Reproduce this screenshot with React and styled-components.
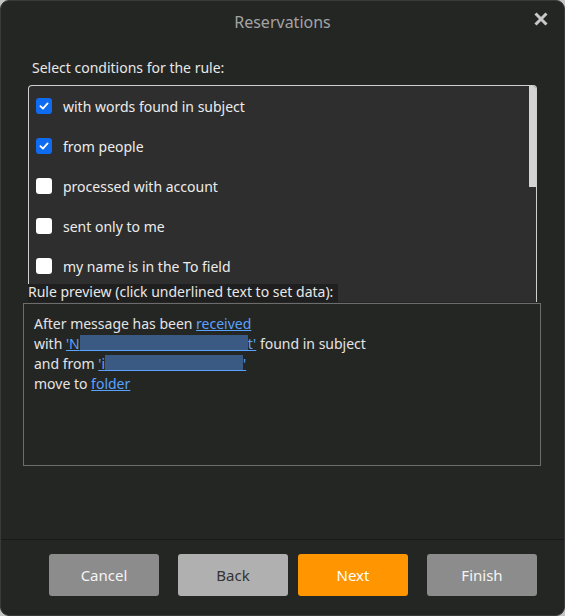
import React from 'react';
import styled, { createGlobalStyle } from 'styled-components';

const Global = createGlobalStyle`
  html, body {
    margin: 0;
    padding: 0;
    background: #c4c4c4;
  }
  body {
    font-family: "Noto Sans", "Open Sans", sans-serif;
  }
`;

const Dialog = styled.div`
  width: 565px;
  height: 616px;
  box-sizing: border-box;
  background: #242624;
  border: 1px solid #3a3a3a;
  border-radius: 9px;
  display: flex;
  flex-direction: column;
  overflow: hidden;
`;

const TitleBar = styled.div`
  position: relative;
  height: 42px;
  display: flex;
  align-items: center;
  justify-content: center;
  color: #a3a3a3;
  font-size: 16px;
`;

const CloseBtn = styled.div`
  position: absolute;
  right: 15px;
  top: 10px;
  width: 16px;
  height: 16px;
  display: flex;
`;

const Body = styled.div`
  flex: 1;
  padding: 0 23px 0 22px;
  display: flex;
  flex-direction: column;
`;

const Heading = styled.div`
  color: #e8e8e8;
  font-size: 14px;
  padding: 15px 0 0 9px;
  height: 27px;
`;

const ListBox = styled.div`
  position: relative;
  margin-left: 5px;
  margin-right: 4px;
  height: 217px;
  box-sizing: border-box;
  background: #2e2e2e;
  border: 1px solid #cfcfcf;
  border-bottom: none;
  border-radius: 4px 4px 0 0;
  overflow: hidden;
`;

const Thumb = styled.div`
  position: absolute;
  top: 0;
  right: 0;
  width: 7px;
  height: 101px;
  background: #d3d3d3;
`;

const Row = styled.label`
  height: 40px;
  display: flex;
  align-items: center;
  gap: 11px;
  padding-left: 7px;
  color: #ececec;
  font-size: 14px;
`;

const Box = styled.span`
  width: 16px;
  height: 16px;
  border-radius: 3px;
  background: ${p => (p.$on ? '#0f6cf0' : '#ffffff')};
  display: flex;
  align-items: center;
  justify-content: center;
`;

const PreviewLabel = styled.div`
  position: relative;
  align-self: flex-start;
  margin-top: -18px;
  margin-left: 5px;
  height: 18px;
  line-height: 16px;
  padding-right: 5px;
  background: #1f1f1f;
  color: #e8e8e8;
  font-size: 14px;
`;

const Preview = styled.div`
  margin-top: 1px;
  height: 163px;
  box-sizing: border-box;
  border: 1px solid #6c6c6c;
  padding: 10px 10px;
  color: #e4e4e4;
  font-size: 14px;
  line-height: 20px;
`;

const Link = styled.span`
  color: #5aa2ff;
  text-decoration: underline;
`;

const Redact = styled.span`
  display: inline-block;
  width: ${p => p.$w}px;
  height: 15px;
  vertical-align: -2px;
  background: #3a5983;
  border-bottom: 1px solid #5aa2ff;
`;

const Footer = styled.div`
  border-top: 1px solid #191919;
  height: 76px;
  box-sizing: border-box;
  display: flex;
  align-items: flex-start;
  padding: 14px 27px 0 48px;
`;

const Button = styled.div`
  width: 110px;
  height: 42px;
  border-radius: 3px;
  display: flex;
  align-items: center;
  justify-content: center;
  font-size: 15px;
  background: ${p => p.$bg};
  color: ${p => p.$fg};
  margin-left: ${p => p.$gap}px;
`;

const Check = () => (
  <svg width="12" height="12" viewBox="0 0 12 12">
    <path d="M2.4 6.2 L4.9 8.6 L9.6 3.4" fill="none" stroke="#fff" strokeWidth="1.8" strokeLinecap="round" strokeLinejoin="round" />
  </svg>
);

const conditions = [
  ['with words found in subject', true],
  ['from people', true],
  ['processed with account', false],
  ['sent only to me', false],
  ['my name is in the To field', false],
  ['my name is in the Cc field', false],
];

export default function App() {
  return (
    <>
      <Global />
      <Dialog>
        <TitleBar>
          Reservations
          <CloseBtn>
            <svg width="16" height="16" viewBox="0 0 16 16">
              <path d="M2.5 2.5 L13.5 13.5 M13.5 2.5 L2.5 13.5" stroke="#c9c9c9" strokeWidth="3" />
            </svg>
          </CloseBtn>
        </TitleBar>
        <Body>
          <Heading>Select conditions for the rule:</Heading>
          <ListBox>
            {conditions.map(([text, on]) => (
              <Row key={text}>
                <Box $on={on}>{on && <Check />}</Box>
                {text}
              </Row>
            ))}
            <Thumb />
          </ListBox>
          <PreviewLabel>Rule preview (click underlined text to set data):</PreviewLabel>
          <Preview>
            <div>After message has been <Link>received</Link></div>
            <div>with <Link>'N<Redact $w={168} />t'</Link> found in subject</div>
            <div>and from <Link>'i<Redact $w={138} />'</Link></div>
            <div>move to <Link>folder</Link></div>
          </Preview>
        </Body>
        <Footer>
          <Button $bg="#8c8c8c" $fg="#f4f4f4" $gap={0}>Cancel</Button>
          <Button $bg="#b0b0b0" $fg="#333333" $gap={19}>Back</Button>
          <Button $bg="#ff9500" $fg="#ffffff" $gap={10}>Next</Button>
          <Button $bg="#8c8c8c" $fg="#f4f4f4" $gap={19}>Finish</Button>
        </Footer>
      </Dialog>
    </>
  );
}
